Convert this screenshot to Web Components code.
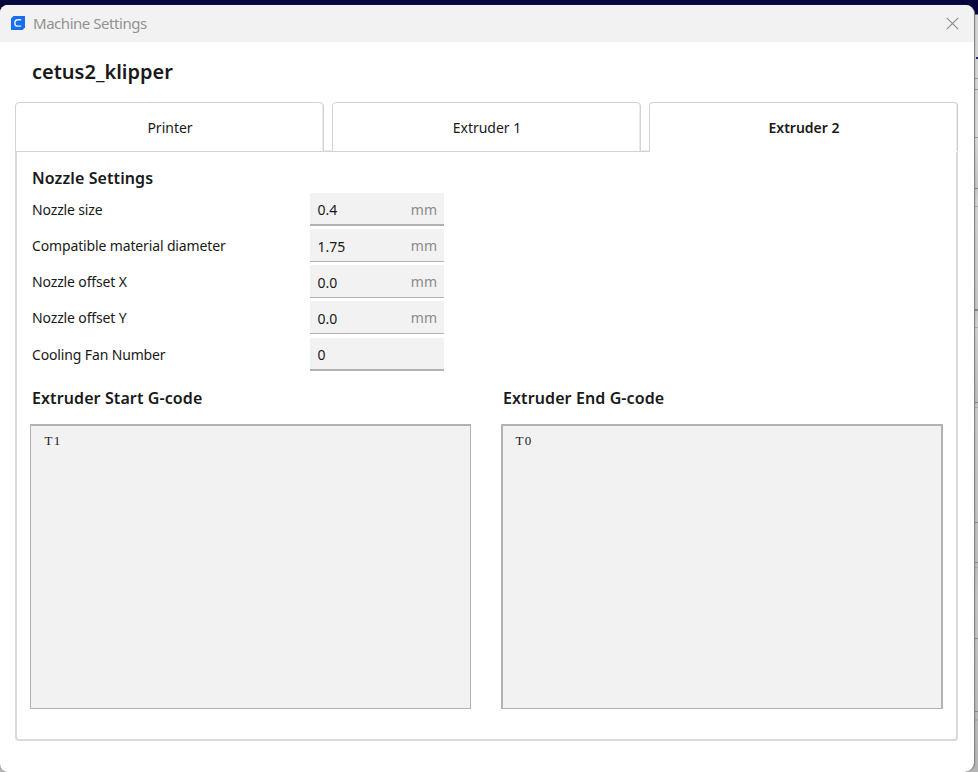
<!DOCTYPE html>
<html lang="en"><head><meta charset="utf-8"><title>Machine Settings</title>
<style>html,body{margin:0;width:978px;height:772px;overflow:hidden}body{font-family:"Noto Sans",sans-serif;color:#191919}</style>
</head><body>
<machine-app></machine-app>
<script>
const define=(name,html)=>customElements.define(name,class extends HTMLElement{
  constructor(){super();this.attachShadow({mode:'open'}).innerHTML=html;}
  connectedCallback(){for(const el of this.shadowRoot.querySelectorAll('[data-attr]'))el.textContent=this.getAttribute(el.dataset.attr)||'';}
});
define('title-bar',`<style>
:host{display:flex;align-items:center;height:37px;background:#f2f2f2;box-sizing:border-box;padding:0 15px 1px 11px;color:#929292;font-size:15px;line-height:20px}
.logo{width:14px;height:14px;margin-right:8px}span{flex:1;letter-spacing:-.46px}.x{width:13px;height:13px}
</style><svg class="logo" viewBox="0 0 14 14"><path d="M2.5 0H14V11.5L11.5 14H0V2.5Z" fill="#196ef0"/><path d="M10.2 3.7H6.8Q3.8 3.7 3.8 6.9T6.8 10.1H10.2" fill="none" stroke="#e5efff" stroke-width="1.4"/></svg><span><slot></slot></span><svg class="x" viewBox="0 0 13 13"><path d="M.8.8 12.2 12.2M12.2.8.8 12.2" stroke="#8a8a8a" stroke-width="1.1"/></svg>`);
define('tab-item',`<style>
:host{display:flex;flex:1;height:50px;box-sizing:border-box;border:1px solid #d3d3d3;border-radius:4px 4px 0 0;align-items:center;justify-content:center;background:#fff;font-size:14px;line-height:20px;padding:2px 0 0 1px;box-shadow:inset -1px 0 #ececec}
:host([active]){border-bottom-color:#fff;font-weight:600;border-right-color:#ccc}
</style><slot></slot>`);
define('tab-bar',`<style>:host{display:flex;gap:8px;height:50px;background:linear-gradient(#ececec 0 1px,#d3d3d3 1px 2px) 0 48px/640px 2px no-repeat}</style><slot></slot>`);
define('setting-row',`<style>
:host{display:grid;grid-template-columns:278px 134px;font-size:14px;line-height:20px;height:33px}
.label{padding-top:7px;letter-spacing:-.14px}.box{display:flex;box-sizing:border-box;background:#f2f2f2;border-bottom:var(--line,1px) solid #b2b2b2;padding:7px 7px 0 7.5px;justify-content:space-between}.unit{color:#8b8b8b}.value{padding-top:var(--drop,0)}
</style><span class="label" data-attr="label"></span><div class="box"><span class="value" data-attr="value"></span><span class="unit" data-attr="unit"></span></div>`);
define('code-box',`<style>
:host{display:block}h3{margin:0 0 0 2px;font-size:16px;font-weight:600;letter-spacing:.1px;line-height:22px;height:37px}
.code{height:285px;box-sizing:border-box;border:1px solid #b2b2b2;border-width:2px var(--r,1px) 1px var(--l,1px);background:#f2f2f2;padding:6px calc(14.5px - var(--l,1px));font:13px/18px "Liberation Serif",serif;letter-spacing:1.2px}
</style><h3 data-attr="heading"></h3><div class="code"><slot></slot></div>`);
define('settings-panel',`<style>
:host{display:block;height:589px;box-sizing:border-box;border:2px solid #dadada;border-top:0;border-radius:0 0 4px 4px;padding:15px 13px 0}
h3{margin:0 0 4px 2px;font-size:16px;font-weight:600;letter-spacing:.1px;line-height:22px;height:22px}
.rows{margin-left:2px;display:flex;flex-direction:column}
setting-row+setting-row{margin-top:3px}.codes{display:grid;grid-template-columns:441px 442px;gap:30px;margin-top:16px}
</style><h3>Nozzle Settings</h3><div class="rows">
<setting-row label="Nozzle size" value="0.4" unit="mm" style="--line:2px"></setting-row>
<setting-row label="Compatible material diameter" value="1.75" unit="mm" style="--drop:1px"></setting-row>
<setting-row label="Nozzle offset X" value="0.0" unit="mm" style="--drop:1px"></setting-row>
<setting-row label="Nozzle offset Y" value="0.0" unit="mm" style="--drop:1px"></setting-row>
<setting-row label="Cooling Fan Number" value="0" style="--line:2px;margin-top:4px"></setting-row></div>
<div class="codes"><code-box heading="Extruder Start G-code">T1</code-box><code-box heading="Extruder End G-code" style="--l:2px;--r:2px">T0</code-box></div>`);
define('app-window',`<style>
:host{display:block;width:975px;height:767px;box-sizing:border-box;background:#fff;border-right:1px solid #858585;border-radius:8px 9px 10px 8px;overflow:hidden;box-shadow:0 0 1px #555}
h1{margin:0;padding:17px 0 0 32px;height:43px;font-size:20px;line-height:26px;font-weight:600;box-sizing:content-box;height:43px}
.content{width:943px;margin-left:15px}
h1{box-sizing:border-box;height:60px}
</style><title-bar>Machine Settings</title-bar><h1>cetus2_klipper</h1><div class="content"><tab-bar><tab-item>Printer</tab-item><tab-item>Extruder 1</tab-item><tab-item active>Extruder 2</tab-item></tab-bar><settings-panel></settings-panel></div>`);
define('machine-app',`<style>
:host{display:block;width:978px;height:772px;box-sizing:border-box;padding-top:5px;background:
linear-gradient(#222266,#222266) 976px 57px/2px 2px no-repeat,
linear-gradient(#999,#999) 974px 78px/4px 1px no-repeat,linear-gradient(#999,#999) 974px 89px/4px 1px no-repeat,linear-gradient(#999,#999) 974px 137px/4px 1px no-repeat,
linear-gradient(#888,#888) 974px 188px/4px 1px no-repeat,linear-gradient(#aaa,#aaa) 974px 206px/4px 1px no-repeat,linear-gradient(#888,#888) 974px 309px/4px 2px no-repeat,linear-gradient(#aaa,#aaa) 974px 327px/4px 1px no-repeat,
linear-gradient(#888,#888) 974px 402px/4px 1px no-repeat,linear-gradient(#aaa,#aaa) 974px 407px/4px 1px no-repeat,linear-gradient(#888,#888) 974px 522px/4px 1px no-repeat,linear-gradient(#888,#888) 974px 562px/4px 1px no-repeat,linear-gradient(#aaa,#aaa) 974px 567px/4px 1px no-repeat,
linear-gradient(#888,#888) 974px 638px/4px 1px no-repeat,linear-gradient(#888,#888) 974px 711px/4px 1px no-repeat,linear-gradient(#aaa,#aaa) 974px 719px/4px 2px no-repeat,
linear-gradient(#07073d 0 14px,#d4d4d4 15px 78px,#d8d8d8 137px,#c5c5c5 188px,#d2d2d2 200px,#c5c5c5 309px,#d0d0d0 327px,#bcbcbc 402px,#c9c9c9 407px,#bdbdbd 562px,#c5c5c5 600px,#b5b5b5)}
</style><app-window></app-window>`);
</script></body></html>
